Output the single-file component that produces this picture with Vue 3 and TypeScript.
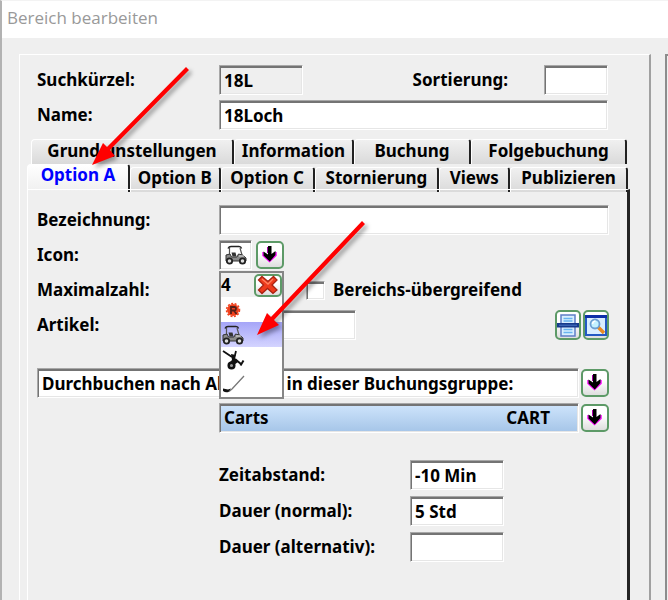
<script setup lang="ts">
import { ref } from 'vue'

interface Tab {
  id: string
  label: string
}

const upperTabs: Tab[] = [
  { id: 'grund', label: 'Grundeinstellungen' },
  { id: 'info', label: 'Information' },
  { id: 'buchung', label: 'Buchung' },
  { id: 'folge', label: 'Folgebuchung' },
]
const lowerTabs: Tab[] = [
  { id: 'a', label: 'Option A' },
  { id: 'b', label: 'Option B' },
  { id: 'c', label: 'Option C' },
  { id: 'storno', label: 'Stornierung' },
  { id: 'views', label: 'Views' },
  { id: 'publ', label: 'Publizieren' },
]
const activeTab = ref('a')

const icons = ['ranger', 'cart', 'trolley', 'club']
const selectedIcon = ref('cart')
const popupOpen = ref(true)

const code = ref('18L')
const sorting = ref('')
const name = ref('18Loch')
const description = ref('')
const article = ref('')
const acrossAreas = ref(false)
const rule = ref('Durchbuchen nach Abschlag in dieser Buchungsgruppe:')
const interval = ref('-10 Min')
const duration = ref('5 Std')
const durationAlt = ref('')
</script>

<template>
  <div class="window">
    <svg class="defs" aria-hidden="true">
      <symbol id="ic-down" viewBox="0 0 24 24">
        <path d="M5 9v3.500l6.500 6L18 12.500V9" fill="none" stroke="#f0f" stroke-width="1.500" />
        <path d="M10 3h3.500v8l4-3v4l-5.700 6.500-6.300-6V8.500l4.500 3z" fill="#000" />
        <path d="M9.500 4v6" stroke="#a0a" stroke-width="1" />
      </symbol>
      <symbol id="ic-ranger" viewBox="0 0 24 24">
        <circle cx="12" cy="12" r="6" fill="#f0401c" />
        <circle cx="12" cy="12" r="6.500" fill="none" stroke="#f0401c" stroke-width="1.500" stroke-dasharray="2 1.500" />
        <path d="M10 16V9h3.500q1.500 0 1.500 1.700t-1.500 1.800H10m3 0l2.500 3.500" fill="none" stroke="#53201a" stroke-width="1.800" />
      </symbol>
      <symbol id="ic-cart" viewBox="0 0 24 24">
        <path d="M4 5.500Q5 3.500 7 3.500h8q2 0 2.500 2" fill="none" stroke="#222" stroke-width="1.500" />
        <path d="M5.500 5v7M16 5l2 7" stroke="#555" stroke-width="1.200" />
        <path d="M2 12l4-1 1.500 3H13l1.500-3 4 1 3.500 3v3H2z" fill="#8a8a8a" stroke="#333" />
        <path d="M7.500 9.500h4l1 4h-4z" fill="#333" />
        <path d="M15 13h5" stroke="#ddd" />
        <circle cx="5.500" cy="18" r="2.700" fill="#ddd" stroke="#222" stroke-width="1.800" />
        <circle cx="18.500" cy="18" r="2.700" fill="#ddd" stroke="#222" stroke-width="1.800" />
      </symbol>
      <symbol id="ic-trolley" viewBox="0 0 24 24">
        <path d="M2 3l9 6M15 3l-1 4" fill="none" stroke="#111" stroke-width="1.800" />
        <path d="M10 6l5 1-1 4 3 3-4 3-6-1 4-4z" fill="#111" />
        <path d="M14 11l6 5M19.500 17.500l3-5" stroke="#111" stroke-width="2" />
        <circle cx="10.500" cy="17.500" r="2.800" fill="#999" stroke="#111" stroke-width="2.500" />
      </symbol>
      <symbol id="ic-club" viewBox="0 0 24 24">
        <path d="M23 3L11 16l-3 2.500" fill="none" stroke="#777" stroke-width="1.300" />
        <path d="M2 15.500l5 1 3-1-2.500 3.500q-3 1-5.500-1z" fill="#111" />
      </symbol>
    </svg>

    <header class="titlebar">Bereich bearbeiten</header>

    <main class="body">
      <form class="panel" @submit.prevent>
        <div class="head-rows">
          <div class="row">
            <label for="code">Suchkürzel:</label>
            <div class="controls">
              <input id="code" v-model="code" class="field w-code readonly" readonly />
              <label class="sort-label" for="sorting">Sortierung:</label>
              <input id="sorting" v-model="sorting" class="field w-sort" />
            </div>
          </div>
          <div class="row">
            <label for="name">Name:</label>
            <input id="name" v-model="name" class="field grow" />
          </div>
        </div>

        <div role="tablist">
          <div class="tabs upper">
            <button
              v-for="t in upperTabs" :key="t.id" type="button" role="tab"
              class="tab" :class="{ active: activeTab === t.id }"
              :aria-selected="activeTab === t.id" @click="activeTab = t.id"
            >{{ t.label }}</button>
          </div>
          <div class="tabs lower">
            <button
              v-for="t in lowerTabs" :key="t.id" type="button" role="tab"
              class="tab" :class="{ active: activeTab === t.id }"
              :aria-selected="activeTab === t.id" @click="activeTab = t.id"
            >{{ t.label }}</button>
          </div>
        </div>

        <section class="tabpanel" role="tabpanel">
          <div class="row">
            <label for="description">Bezeichnung:</label>
            <input id="description" v-model="description" class="field grow" />
          </div>

          <div class="row">
            <span>Icon:</span>
            <div class="controls icon-picker">
              <span class="field icon-field"><svg class="glyph"><use :href="'#ic-' + selectedIcon" /></svg></span>
              <button type="button" class="btn" aria-label="Icon wählen" @click="popupOpen = !popupOpen">
                <svg class="glyph"><use href="#ic-down" /></svg>
              </button>
              <div v-if="popupOpen" class="popup">
                <div class="popup-head">
                  <span>4</span>
                  <button type="button" class="btn close" aria-label="Schließen" @click="popupOpen = false">
                    <svg viewBox="0 0 22 20" class="cross">
                      <path d="M5 1.500l6 5 5.500-5L20 5l-5 5 5 5-4 3.500-5.500-5-5.500 5L1.500 15l5-5-5-5z" fill="#ee3b1d" stroke="#a92312" stroke-width="1.300" />
                      <path d="M5 4l6 5 5-5" fill="none" stroke="#ff8260" stroke-width="1.300" />
                    </svg>
                  </button>
                </div>
                <button
                  v-for="i in icons" :key="i" type="button" class="option"
                  :class="{ selected: selectedIcon === i }" :aria-label="i" @click="selectedIcon = i"
                ><svg class="glyph"><use :href="'#ic-' + i" /></svg></button>
              </div>
            </div>
          </div>

          <div class="row">
            <span>Maximalzahl:</span>
            <label class="check"><input v-model="acrossAreas" type="checkbox" />Bereichs-übergreifend</label>
          </div>

          <div class="row">
            <label for="article">Artikel:</label>
            <div class="controls">
              <input id="article" v-model="article" class="field w-article" />
              <div class="tools">
                <button type="button" class="btn tool" aria-label="Liste">
                  <svg viewBox="0 0 22 26">
                    <path d="M4 3h14v21H4z" fill="#d9efff" stroke="#5f7fc8" stroke-width="1.500" />
                    <path d="M6.500 6.500h9M6.500 9h9M6.500 17.500h9M6.500 20.500h9" stroke="#68b4f0" stroke-width="1.300" />
                    <path d="M0 11h22v4.500H0z" fill="#163a8c" />
                    <path d="M2 13.200h18" stroke="#4b78c8" />
                  </svg>
                </button>
                <button type="button" class="btn tool" aria-label="Suchen">
                  <svg viewBox="0 0 22 26">
                    <path d="M1 4h20v19H1z" fill="#d9edff" stroke="#2459c4" stroke-width="2" />
                    <path d="M0 3h22v3H0z" fill="#0d2fa8" />
                    <path d="M13 15l6 6" stroke="#e98a24" stroke-width="3.500" />
                    <circle cx="10" cy="12" r="4.500" fill="#c4f1ff" stroke="#6d9fd2" stroke-width="1.800" />
                    <path d="M7.500 12q.5-3 3-3" fill="none" stroke="#fff" stroke-width="1.500" />
                  </svg>
                </button>
              </div>
            </div>
          </div>

          <div class="rule">
            <input v-model="rule" class="field grow" aria-label="Regel" />
            <button type="button" class="btn" aria-label="Regel wählen">
              <svg class="glyph"><use href="#ic-down" /></svg>
            </button>
          </div>

          <div class="group">
            <button type="button" class="field entry"><span>Carts</span><span>CART</span></button>
            <button type="button" class="btn" aria-label="Buchungsgruppe wählen">
              <svg class="glyph"><use href="#ic-down" /></svg>
            </button>
          </div>

          <div class="times">
            <label for="interval">Zeitabstand:</label>
            <input id="interval" v-model="interval" class="field" />
            <label for="duration">Dauer (normal):</label>
            <input id="duration" v-model="duration" class="field" />
            <label for="durationAlt">Dauer (alternativ):</label>
            <input id="durationAlt" v-model="durationAlt" class="field" />
          </div>
        </section>
      </form>
      <aside class="side"></aside>
    </main>

    <svg class="pointers" viewBox="0 0 400 400" aria-hidden="true">
      <g fill="#f00" stroke="none">
        <path d="M186 67l3 3-79 80 5 6-23 9 11-22 4 4z" />
        <path d="M362 221l3 3-91 96 5 5-22 10 10-22 4 4z" />
      </g>
    </svg>
  </div>
</template>

<style>
body {
  background: #efefef;
}
</style>

<style scoped>
.window {
  position: relative;
  box-sizing: border-box;
  min-height: 100vh;
  display: flex;
  flex-direction: column;
  overflow: hidden;
  border-left: 2px solid #b2b2b2;
  border-top: 1px solid #f3f3f3;
  background: #efefef;
  color: #000;
  font: bold 17px/20px "Noto Sans", sans-serif;
}
.window * {
  box-sizing: border-box;
}
.defs {
  position: absolute;
  width: 0;
  height: 0;
}
.titlebar {
  height: 37px;
  padding: 5px;
  background: #fff;
  color: #999;
  font: 17px/24px "Open Sans", sans-serif;
}
.body {
  flex: 1;
  display: flex;
  gap: 14px;
  padding: 16px 0 0 17px;
}
.panel {
  flex: 1;
  min-width: 0;
  display: flex;
  flex-direction: column;
  border: 1px solid #fff;
  border-width: 1px 2px 0 1px;
  border-right-color: #a0a0a0;
  padding: 10px 19px 0 7px;
}
.side {
  flex: 0 0 3px;
  border-left: 2px solid #8c8c8c;
  border-top: 2px solid #8c8c8c;
}
.head-rows {
  display: grid;
  gap: 5px;
  padding: 0 22px 9px 10px;
}
.row {
  display: grid;
  grid-template-columns: 182px 1fr;
  align-items: center;
  min-height: 30px;
}
.controls {
  display: flex;
  align-items: center;
}
.field {
  height: 30px;
  min-width: 0;
  margin: 0;
  padding: 0 4px;
  border: 1px solid;
  border-color: #a8a8a8 #fff #fff #a8a8a8;
  border-radius: 0;
  box-shadow: inset 1px 2px #747474, inset -1px -1px #e6e6e6;
  background: #fff;
  color: #000;
  font: inherit;
  outline: none;
}
.grow {
  width: 100%;
}
.readonly {
  background: #efefef;
}
.w-code {
  width: 84px;
}
.sort-label {
  margin-left: auto;
  padding-right: 36px;
}
.w-sort {
  width: 64px;
}
.w-article {
  width: 137px;
}

.tabs {
  display: grid;
  align-items: end;
}
.upper {
  grid-template-columns: 203fr 120fr 117fr 156fr;
  padding: 0 3px 0 4px;
}
.lower {
  grid-template-columns: 103fr 91fr 94fr 125fr 71fr 118fr;
  height: 25px;
  padding-right: 2px;
}
.tab {
  height: 25px;
  min-width: 0;
  margin: 0;
  padding: 0 0 2px;
  border: 0 solid #222;
  border-top: 1px solid #fff;
  border-left: 1px solid #fff;
  border-right: 2px solid #222;
  border-radius: 4px 3px 0 0;
  background: linear-gradient(#f0f0f0, #dadada);
  color: #000;
  font: inherit;
  white-space: nowrap;
}
.lower .tab {
  padding-bottom: 4px;
}
.lower .tab.active {
  height: 28px;
  padding-bottom: 8px;
  background: linear-gradient(#fff, #efefef);
  color: #00f;
}

.tabpanel {
  flex: 1;
  display: flex;
  flex-direction: column;
  gap: 5px;
  padding: 15px 18px 0 9px;
  border-left: 1px solid #fff;
  border-top: 1px solid #fff;
  border-right: 3px solid #222;
}
.icon-picker {
  position: relative;
  gap: 4px;
}
.icon-field {
  width: 33px;
  display: flex;
  align-items: center;
}
.glyph {
  display: block;
  flex: none;
  width: 24px;
  height: 24px;
}
.btn {
  flex: none;
  display: flex;
  align-items: center;
  justify-content: center;
  width: 28px;
  height: 28px;
  margin: 0;
  padding: 0;
  border: 2px solid #5d9a67;
  border-radius: 5px;
  background: linear-gradient(#fff 40%, #dedede);
}
.popup {
  position: absolute;
  z-index: 2;
  top: 31px;
  left: 0;
  width: 65px;
  border: 2px solid #868686;
  background: #fff;
}
.popup-head {
  display: flex;
  align-items: center;
  justify-content: space-between;
  height: 24px;
  background: #efefef;
}
.close {
  height: 23px;
}
.cross {
  width: 22px;
  height: 20px;
}
.option {
  display: block;
  width: 100%;
  height: 25px;
  margin: 0;
  padding: 0;
  border: 0;
  background: #fff;
}
.option.selected {
  background: linear-gradient(#a5a5f8, #d4d4ff);
}
.check {
  display: flex;
  align-items: center;
  gap: 8px;
  padding-left: 87px;
}
.check input {
  appearance: none;
  width: 19px;
  height: 19px;
  margin: 0;
  border: 1px solid;
  border-color: #a8a8a8 #fff #fff #a8a8a8;
  box-shadow: inset 1px 2px #747474, inset -1px -1px #e6e6e6;
  background: #fff;
}
.check input:checked {
  background: #444;
}
.tools {
  display: flex;
  gap: 2px;
  margin-left: auto;
}
.tool {
  width: 26px;
  height: 30px;
}
.tool svg {
  width: 22px;
  height: 26px;
}
.rule,
.group {
  display: flex;
  align-items: center;
  gap: 2px;
}
.rule {
  padding-top: 23px;
}
.group {
  padding-left: 182px;
}
.entry {
  flex: 1;
  display: flex;
  align-items: center;
  justify-content: space-between;
  padding-right: 28px;
  background: linear-gradient(#cfe5fc, #a5c5e8);
}
.times {
  display: grid;
  grid-template-columns: 191px 94px;
  align-items: center;
  gap: 6px 0;
  padding: 22px 0 0 182px;
}
.pointers {
  position: absolute;
  z-index: 3;
  top: -1px;
  left: -2px;
  width: 400px;
  height: 400px;
  pointer-events: none;
  filter: drop-shadow(3px 3px 2px rgba(0, 0, 0, 0.35));
}
</style>
